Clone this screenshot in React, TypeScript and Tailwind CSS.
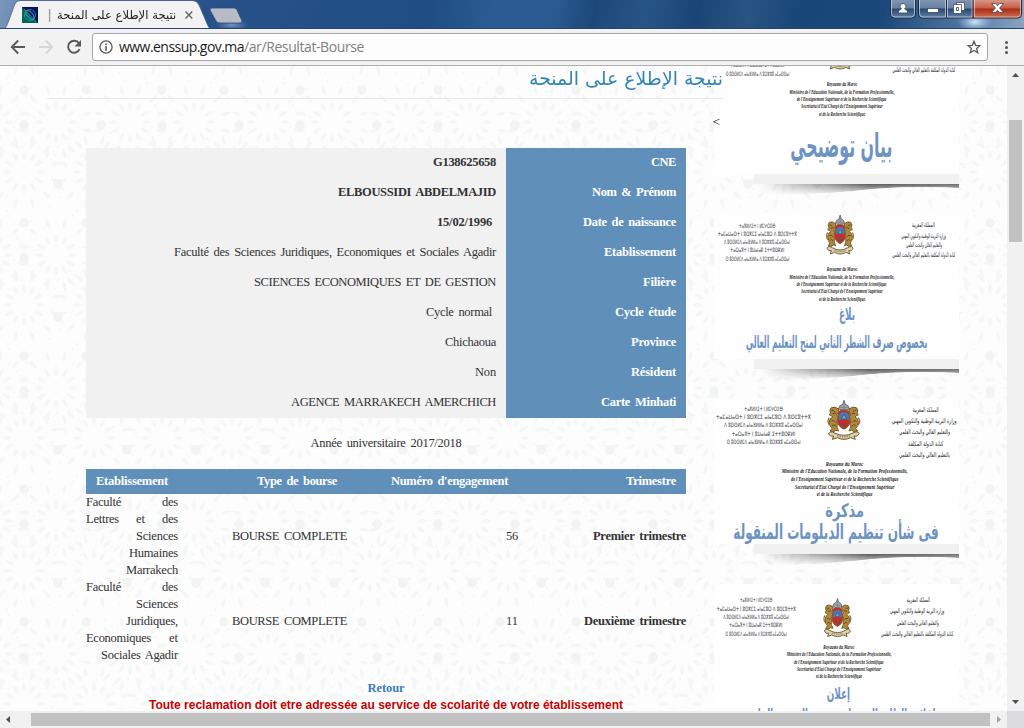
import React, { useLayoutEffect, useRef, useState } from "react";

/* Latin text spread to a given width through letter spacing. */
function Fit({ w, children, className = "" }: { w: number; children: string; className?: string }) {
  const ref = useRef<HTMLSpanElement>(null);
  const [gap, setGap] = useState(0);
  useLayoutEffect(() => {
    const el = ref.current;
    if (el) setGap((w - el.getBoundingClientRect().width) / children.length);
  }, []);
  return (
    <span ref={ref} style={{ letterSpacing: gap }} className={`inline-block whitespace-pre ${className}`}>
      {children}
    </span>
  );
}

/* Arabic text keeps its joins, so it is stretched as a whole. */
function Arabic({ w, children, className = "" }: { w: number; children: string; className?: string }) {
  const ref = useRef<HTMLSpanElement>(null);
  const [scale, setScale] = useState(1);
  useLayoutEffect(() => {
    const el = ref.current;
    if (el) setScale(w / el.offsetWidth);
  }, []);
  return (
    <span
      ref={ref}
      dir="rtl"
      style={{ transform: `scaleX(${scale})` }}
      className={`inline-block origin-right whitespace-nowrap font-['DejaVu_Sans',sans-serif] ${className}`}
    >
      {children}
    </span>
  );
}

function Backdrop() {
  const petals = [0, 30, 60, 90, 120, 150, 180, 210, 240, 270, 300, 330];
  return (
    <svg className="absolute inset-0 h-full w-full" aria-hidden="true">
      <defs>
        <g id="rose">
          {petals.map((a) => (
            <g key={a} transform={`rotate(${a})`}>
              <path d="M0-12Q4-16 0-22Q-4-16 0-12Z" />
              <path d="M7-26Q12-30 10-37Q5-33 7-26Z" />
              <circle cx="3" cy="-30" r=".8" />
              <circle cx="-5" cy="-42" r="1.2" />
            </g>
          ))}
        </g>
        <g id="star">
          {petals.map((a) => (
            <ellipse key={a} cx="0" cy="-2.6" rx="1.3" ry="2.6" transform={`rotate(${a})`} />
          ))}
        </g>
        <pattern id="zellige" width="138" height="133" patternUnits="userSpaceOnUse" x="94" y="14">
          <g fill="#f5f7f7">
            <use href="#rose" x="36" y="42" />
            <use href="#rose" x="100" y="42" />
            <use href="#rose" x="68" y="92" />
            <use href="#rose" x="0" y="92" />
            <use href="#rose" x="138" y="92" />
          </g>
          <g fill="#f2f4f4">
            <use href="#star" x="33" y="104" />
            <use href="#star" x="7" y="45" />
            <use href="#star" x="68" y="45" />
            <use href="#star" x="102" y="104" />
            <use href="#star" x="68" y="10" />
            <use href="#star" x="130" y="10" />
          </g>
        </pattern>
      </defs>
      <rect width="100%" height="100%" fill="url(#zellige)" />
    </svg>
  );
}

function WindowTop() {
  return (
    <div className="relative h-[29px] shrink-0 overflow-hidden border-b border-[#28466f] bg-[linear-gradient(102deg,#7c96bb_0%,#6483af_3%,#28528a_20%,#1f4d84_42%,#2b5b92_48%,#2b5a92_54%,#1c4879_58%,#285587_63%,#194475_68%,#295484_73%,#184678_78%,#1b487a_86%,#4e75a0_94%,#8ba5c0_100%)]">
      <svg className="absolute inset-0" width="1024" height="29">
        <defs>
          <linearGradient id="btn" x1="0" y1="0" x2="0" y2="1">
            <stop offset="0" stopColor="#8398b4" />
            <stop offset=".48" stopColor="#6580a3" />
            <stop offset=".52" stopColor="#29476f" />
            <stop offset="1" stopColor="#6583a8" />
          </linearGradient>
          <linearGradient id="close" x1="0" y1="0" x2="0" y2="1">
            <stop offset="0" stopColor="#dc9c8e" />
            <stop offset=".48" stopColor="#c75b46" />
            <stop offset=".52" stopColor="#ac2b16" />
            <stop offset="1" stopColor="#d07350" />
          </linearGradient>
          <radialGradient id="glow">
            <stop offset="0" stopColor="#d9edff" stopOpacity=".95" />
            <stop offset="1" stopColor="#9fc0e4" stopOpacity="0" />
          </radialGradient>
        </defs>
        <path d="M0 29L5 29C8 25 13 8 15 4Q16 1 20 1H193Q197 1 199 5L208 26Q209 29 212 29Z" fill="#f2f2f2" />
        <path d="M0 28.5H5C8 25 13 8 15 4Q16 .5 20 .5H193Q197 .5 199 5L208 26Q209 28.5 212 28.5" fill="none" stroke="#4b6790" strokeWidth=".8" />
        <ellipse cx="232" cy="25" rx="17" ry="6" fill="url(#glow)" opacity=".45" />
        <path d="M212 8H234Q236 8 237 10L242 21Q242 23 240 23H220Q217 23 216 21L210 10Q210 8 212 8Z" fill="#b6bbc6" stroke="#2c4d7b" strokeWidth=".8" />
        <rect x="22" y="7" width="16" height="16" fill="#07105f" />
        <path d="M22 7L38 23H22Z" fill="#00665c" />
        <g fill="none" stroke="#3a93a5" strokeWidth=".8">
          <circle cx="30" cy="15" r="5.5" />
          <ellipse cx="30" cy="15" rx="5.5" ry="2.5" transform="rotate(45 30 15)" />
          <ellipse cx="30" cy="15" rx="3" ry="5.5" transform="rotate(-35 30 15)" />
          <path d="M24 9L36 22" />
        </g>
        <path d="M185.500 11.500L192.300 18.500M192.300 11.500L185.500 18.500" stroke="#6a6a6a" strokeWidth="1.500" />
        <ellipse cx="975" cy="22" rx="18" ry="9" fill="url(#glow)" />
        <path d="M890.5 -1V14Q890.5 18 894.5 18H911.5Q915.5 18 915.5 14V-1Z" fill="url(#btn)" stroke="#1c2f4c" />
        <path d="M891.5 0V13.500Q891.500 17 895 17H911Q914.500 17 914.500 13.500V0" fill="none" stroke="#c2d0e1" strokeOpacity=".8" />
        <path d="M918.5 -1V14Q918.5 18 922.5 18H973V-1Z" fill="url(#btn)" stroke="#1c2f4c" />
        <path d="M973 -1V18H1018Q1021.500 18 1021.500 14V-1Z" fill="url(#close)" stroke="#3f1d20" />
        <path d="M919.5 0V13.500Q919.500 17 923 17H945.500V0M947.500 0V17H972V0M974.500 0V17H1017Q1020.500 17 1020.500 13.500V0" fill="none" stroke="#d8dfe9" strokeOpacity=".65" />
        <path d="M946.500 0V17" stroke="#1c2f4c" />
        <g fill="#fff" stroke="#39475c" strokeWidth=".8">
          <path d="M898.500 13V11.500Q899 9.500 901.500 9Q900 8 900 6.300Q900.200 3.500 903 3.500Q905.800 3.500 906 6.300Q906 8 904.500 9Q907 9.500 907.500 11.500V13Z" />
          <rect x="927.5" y="8.5" width="11" height="4" />
          <path d="M956.500 2.500H964.500V10.500H956.500Z" />
          <path fillRule="evenodd" d="M953.500 4.500H961.500V13.500H953.500ZM956.500 7.500V10.500H958.500V7.500Z" />
          <path d="M991.5 3.5H995.5L997.5 5.800L999.500 3.500H1003.500L999.600 8L1003.500 12.500H999.500L997.500 10.200L995.500 12.500H991.500L995.400 8Z" />
        </g>
      </svg>
      <div className="relative flex h-full w-[176px] items-center justify-end pt-[1px]">
        <span className="mr-auto pl-[50px] text-[12px] leading-none text-[#777]">|</span>
        <Arabic w={119} className="text-[12px] leading-[20px] text-[#222]">
          نتيجة الإطلاع على المنحة
        </Arabic>
      </div>
    </div>
  );
}

function Toolbar() {
  return (
    <div className="flex h-[37px] shrink-0 items-center border-b border-[#adadad] bg-[#f2f2f2]">
      <svg width="92" height="36" fill="none" strokeWidth="1.900">
        <path d="M25 18H12M18.200 11.500L11.800 18L18.200 24.500" stroke="#5a5a5a" />
        <path d="M39 18H52M45.800 11.500L52.200 18L45.800 24.500" stroke="#d6d6d6" />
        <path d="M79 14.200A6 6 0 1 0 79.600 20.200" stroke="#5a5a5a" />
        <path d="M81 11V17.500H74.500Z" fill="#5a5a5a" />
      </svg>
      <div className="flex h-[28px] w-[896px] items-center rounded-[3px] border border-[#a6a6a6] bg-[#fdfdfd]">
        <svg className="ml-[6px] shrink-0" width="14" height="14" fill="none" stroke="#5a5a5a">
          <circle cx="7" cy="7" r="6.1" strokeWidth="1.3" />
          <path d="M7 6V10.700M7 3.400V5" strokeWidth="1.6" />
        </svg>
        <div className="ml-[6px] flex font-['Open_Sans','Noto_Sans',sans-serif] text-[14px] leading-[26px]">
          <Fit w={125} className="text-[#1c1c1c]">www.enssup.gov.ma</Fit>
          <Fit w={120} className="text-[#808080]">/ar/Resultat-Bourse</Fit>
        </div>
        <svg className="mr-[6px] ml-auto" width="14" height="14" fill="none" stroke="#5a5a5a" strokeWidth="1.3">
          <path d="M7 1.300L8.600 5.300L13 5.600L9.600 8.400L10.700 12.700L7 10.400L3.300 12.700L4.400 8.400L1 5.600L5.400 5.300Z" />
        </svg>
      </div>
      <div className="ml-[17px] flex flex-col gap-[2px]">
        <i className="h-[3px] w-[3px] rounded-full bg-[#555]" />
        <i className="h-[3px] w-[3px] rounded-full bg-[#555]" />
        <i className="h-[3px] w-[3px] rounded-full bg-[#555]" />
      </div>
    </div>
  );
}

const student: [string, number, string, number, boolean, boolean][] = [
  ["CNE", 25, "G138625658", 63, true, false],
  ["Nom & Prénom", 84, "ELBOUSSIDI ABDELMAJID", 158, true, false],
  ["Date de naissance", 93, "15/02/1996", 55, true, true],
  ["Etablissement", 72, "Faculté des Sciences Juridiques, Economiques et Sociales Agadir", 322, false, false],
  ["Filière", 33, "SCIENCES ECONOMIQUES ET DE GESTION", 242, false, false],
  ["Cycle étude", 61, "Cycle normal", 66, false, true],
  ["Province", 45, "Chichaoua", 51, false, false],
  ["Résident", 45, "Non", 21, false, false],
  ["Carte Minhati", 75, "AGENCE MARRAKECH AMERCHICH", 205, false, false],
];

type Word = [string, number];
const grants: { lines: Word[][]; no: string; term: string; termW: number }[] = [
  {
    lines: [
      [["Faculté", 35], ["des", 16]],
      [["Lettres", 33], ["et", 9], ["des", 16]],
      [["Sciences", 42]],
      [["Humaines", 49]],
      [["Marrakech", 52]],
    ],
    no: "56",
    term: "Premier trimestre",
    termW: 93,
  },
  {
    lines: [
      [["Faculté", 35], ["des", 16]],
      [["Sciences", 42]],
      [["Juridiques,", 52]],
      [["Economiques", 65], ["et", 9]],
      [["Sociales Agadir", 77]],
    ],
    no: "11",
    term: "Deuxième trimestre",
    termW: 102,
  },
];

function Main() {
  return (
    <div className="relative z-10 flex w-[723px] shrink-0 flex-col">
      <div className="ml-[47px] flex h-[33px] shrink-0 justify-end border-b border-[#e9e9e9]">
        <Arabic w={194} className="h-[26px] text-[19px] leading-[25px] text-[#2f86b5]">
          نتيجة الإطلاع على المنحة
        </Arabic>
      </div>
      <div className="flex h-[49px] shrink-0 justify-end pt-[14px] pr-[3px] font-['Liberation_Serif',serif] text-[13px] leading-[17px] text-black">&lt;</div>
      <div className="ml-[86px] flex w-[600px] shrink-0 flex-col font-['Liberation_Serif',serif] text-[12.5px] text-[#333] [word-spacing:2px]">
        <div className="flex flex-col">
          {student.map(([label, lw, value, vw, bold, space]) => (
            <div key={label} className="flex h-[30px] leading-[28px]">
              <div className={`flex w-[420px] justify-end bg-[#f1f1f1] ${space ? "pr-[14px]" : "pr-[10px]"} ${bold ? "font-bold" : ""}`}>
                <Fit w={vw}>{value}</Fit>
              </div>
              <div className="flex w-[180px] justify-end bg-[#6090ba] pr-[10px] font-bold text-white">
                <Fit w={lw}>{label}</Fit>
              </div>
            </div>
          ))}
        </div>
        <div className="flex h-[51px] justify-center leading-[50px]">
          <Fit w={151}>Année universitaire 2017/2018</Fit>
        </div>
        <div className="grid h-[25px] grid-cols-[92px_169px_171px_168px] bg-[#6090ba] text-right leading-[24px] font-bold text-white">
          <div className="pr-[10px]"><Fit w={72}>Etablissement</Fit></div>
          <div className="pr-[10px]"><Fit w={80}>Type de bourse</Fit></div>
          <div className="pr-[10px]"><Fit w={117}>Numéro d'engagement</Fit></div>
          <div className="pr-[10px]"><Fit w={50}>Trimestre</Fit></div>
        </div>
        {grants.map((g) => (
          <div key={g.no} className="grid h-[85px] grid-cols-[92px_169px_171px_168px] items-center text-right leading-[17px]">
            <div className="flex flex-col">
              {g.lines.map((words, i) => (
                <div key={i} className={`flex h-[17px] ${words.length > 1 ? "justify-between" : "justify-end"}`}>
                  {words.map(([t, w]) => (
                    <Fit key={t} w={w}>{t}</Fit>
                  ))}
                </div>
              ))}
            </div>
            <div><Fit w={115}>BOURSE COMPLETE</Fit></div>
            <div><Fit w={12}>{g.no}</Fit></div>
            <div className="font-bold"><Fit w={g.termW}>{g.term}</Fit></div>
          </div>
        ))}
        <div className="flex h-[33px] shrink-0 justify-center pt-[16px] leading-[17px] font-bold text-[#3a7cba]">
          <Fit w={37}>Retour</Fit>
        </div>
        <div className="flex shrink-0 justify-center font-['Liberation_Sans',Arial,sans-serif] text-[12px] leading-[17px] font-bold text-[#c80000] [word-spacing:0]">
          <Fit w={474}>Toute reclamation doit etre adressée au service de scolarité de votre établissement</Fit>
        </div>
      </div>
    </div>
  );
}

type Row = [text: string, x1: number, x2: number, y: number];

const tifinagh = [
  "ⵜⴰⴳⵍⴷⵉⵜ ⵏ ⵍⵎⵖⵔⵉⴱ",
  "ⵜⴰⵎⴰⵡⴰⵙⵜ ⵏ ⵓⵙⴳⵎⵉ ⴰⵏⴰⵎⵓⵔ ⴷ ⵓⵙⵎⵓⵜⵜⴳ",
  "ⴷ ⵓⵙⵙⵍⵎⴷ ⴰⵏⴰⴼⵍⵍⴰ ⴷ ⵓⵔⵣⵣⵓ ⴰⵎⴰⵙⵙⴰⵏ",
  "ⵜⴰⵔⴰⴳⵜ ⵏ ⵓⵡⴰⵏⴰⴽ ⵉⵜⵜⵓⵙⴽⵍⵏ",
  "ⵙ ⵓⵙⵙⵍⵎⴷ ⴰⵏⴰⴼⵍⵍⴰ ⴷ ⵓⵔⵣⵣⵓ ⴰⵎⴰⵙⵙⴰⵏ",
];
const french = [
  "Royaume du Maroc",
  "Ministère de l'Education Nationale, de la Formation Professionnelle,",
  "de l'Enseignement Supérieur et de la Recherche Scientifique",
  "Secrétariat d'Etat Chargé de l'Enseignement Supérieur",
  "et de la Recherche Scientifique",
];
const arabicLong = ["المملكة المغربية", "وزارة التربية الوطنية والتكوين المهني", "والتعليم العالي والبحث العلمي", "كتابة الدولة المكلفة بالتعليم العالي والبحث العلمي"];
const arabicSplit = ["المملكة المغربية", "وزارة التربية الوطنية والتكوين المهني", "والتعليم العالي والبحث العلمي", "كتابة الدولة المكلفة", "بالتعليم العالي والبحث العلمي"];

const place = (texts: string[], at: [number, number, number][]): Row[] => texts.map((t, i) => [t, ...at[i]]);

interface Letter {
  dy: number;
  emblem: string;
  tif: Row[];
  ar: Row[];
  fr: Row[];
  title: [string, number, number, number, number][];
}

const base = {
  dy: -27,
  emblem: "translate(378 30) scale(.85 1)",
  tif: place(tifinagh, [[117, 226, 62], [53, 291, 87], [72, 270, 112], [91, 253, 136], [77, 268, 161]]),
  ar: place(arabicLong, [[636, 704, 62], [604, 738, 93], [618, 726, 122], [577, 766, 150]]),
  fr: place(french, [[380, 472, 191], [268, 583, 214], [290, 559, 236], [304, 548, 258], [357, 495, 280]]),
};

const letters: Letter[] = [
  { ...base, tif: base.tif.slice(3), ar: base.ar.slice(3), title: [["بيان توضيحي", 271, 577, 410, 98]] },
  { ...base, title: [["بلاغ", 417, 465, 345, 52], ["بخصوص صرف الشطر الثاني لمنح التعليم العالي", 138, 682, 428, 52]] },
  {
    dy: -42,
    emblem: "translate(382 46)",
    tif: place(tifinagh, [[133, 248, 71], [48, 333, 95], [73, 308, 121], [95, 286, 146], [80, 302, 171]]),
    ar: place(arabicSplit, [[638, 716, 76], [575, 770, 110], [597, 750, 143], [625, 730, 177], [597, 750, 212]]),
    fr: place(french, [[377, 490, 237], [245, 623, 258], [273, 595, 282], [285, 583, 304], [350, 517, 326]]),
    title: [["مذكرة", 376, 492, 395, 56], ["فى شأن تنظيم الدبلومات المنقولة", 100, 716, 461, 62]],
  },
  {
    dy: -57,
    emblem: "translate(370 100) scale(.85 .98)",
    tif: place(tifinagh, [[120, 217, 105], [50, 288, 131], [70, 267, 156], [88, 247, 181], [76, 260, 206]]),
    ar: place(arabicLong, [[620, 690, 105], [570, 733, 140], [590, 717, 175], [543, 760, 208]]),
    fr: place(french, [[370, 463, 245], [260, 575, 267], [282, 551, 289], [291, 543, 311], [348, 486, 333]]),
    title: [["إعلان", 380, 450, 402, 48], ["لفائدة الطلبة المسجلين برسم الموسم الجامعي", 118, 706, 464, 48]],
  },
];

function Emblem({ transform }: { transform: string }) {
  const lion = (
    <g>
      <path d="M34 26Q22 17 12 22Q4 28 10 38L6 44Q14 46 16 50Q6 54 6 66Q6 78 14 84L8 92Q18 98 26 90L34 92Q26 80 30 70Q26 60 32 54Q36 48 28 44Q36 38 34 26Z" fill="#b0883a" stroke="#5d4a28" strokeWidth="2.500" />
      <path d="M12 30Q18 28 22 34M16 40L26 38M12 62Q20 58 24 66M14 76Q20 70 26 78" fill="none" stroke="#60481e" strokeWidth="3" />
      <path d="M6 74Q-2 62 6 52" fill="none" stroke="#8e6d2f" strokeWidth="4" />
    </g>
  );
  return (
    <g transform={transform}>
      {lion}
      <g transform="translate(99 0) scale(-1 1)">{lion}</g>
      <path d="M34 34Q50 22 65 34L68 64Q66 80 50 86Q33 80 31 64Z" fill="#d3262c" stroke="#7d5427" strokeWidth="3" />
      <path d="M35 58V48Q36 36 50 36Q63 36 65 48V58Z" fill="#3e7fb8" />
      <path d="M42 56L46 48L50 43L54 48L58 56Z" fill="#8d9aa3" stroke="#2f4964" strokeWidth="2" />
      <path d="M43 72H57L46 80L50 66L54 80Z" fill="none" stroke="#3c6e37" strokeWidth="2" />
      <path d="M33 26Q35 14 46 12L50 0L54 12Q65 14 66 26Q50 32 33 26Z" fill="#a7a5a8" stroke="#5d6168" strokeWidth="2.500" />
      <path d="M50 1V26M38 20Q50 25 62 20" fill="none" stroke="#71757c" strokeWidth="2" />
      <path d="M4 100Q8 90 22 98Q50 112 77 98Q92 90 95 100Q92 110 80 107L84 117L70 112Q50 122 30 112L15 117L19 107Q8 110 4 100Z" fill="#e2d2a6" stroke="#655737" strokeWidth="3" />
      <path d="M30 106Q50 114 70 106" fill="none" stroke="#6b5b3a" strokeWidth="3" strokeDasharray="4 3" />
    </g>
  );
}

function Line({ row, size, className, lift }: { row: Row; size: number; className: string; lift: number }) {
  const [t, a, b, y] = row;
  return (
    <text x={(a + b) / 2} y={y + lift} textAnchor="middle" fontSize={size} textLength={b - a} lengthAdjust="spacingAndGlyphs" className={className}>
      {t}
    </text>
  );
}

function Card({ letter, n }: { letter: Letter; n: number }) {
  return (
    <div className="flex h-[185px] w-[245px] shrink-0 flex-col">
      <svg className="h-[145px] w-[245px] shrink-0 bg-[#fefefe]" viewBox="0 0 735 435">
        <g transform={`translate(-42 ${letter.dy})`}>
          <Emblem transform={letter.emblem} />
          {letter.tif.map((r) => (
            <Line key={r[0]} row={r} size={18} lift={6} className="fill-[#3c3c44] font-['DejaVu_Sans',sans-serif]" />
          ))}
          {letter.ar.map((r) => (
            <Line key={r[0]} row={r} size={20} lift={5} className="fill-[#25252b] font-['DejaVu_Sans',sans-serif]" />
          ))}
          {letter.fr.map((r) => (
            <Line key={r[0]} row={r} size={21} lift={7} className="fill-[#1c1c22] font-['Liberation_Serif',serif] font-bold italic" />
          ))}
          {letter.title.map(([t, a, b, y, size]) => (
            <Line key={t} row={[t, a, b, y]} size={size} lift={0} className="fill-[#6c93c2] font-['DejaVu_Sans',sans-serif] font-bold" />
          ))}
        </g>
      </svg>
      <div className="ml-[40px] h-[10px] w-[205px] bg-[#f1f1f1]" />
      <svg className="ml-[40px]" width="205" height="12">
        <defs>
          <linearGradient id={`sh${n}`} x1="0" x2="1" y1="0" y2="0">
            <stop offset="0" stopColor="#777" stopOpacity="0" />
            <stop offset=".2" stopColor="#666" stopOpacity=".4" />
            <stop offset=".55" stopColor="#333" stopOpacity=".8" />
            <stop offset="1" stopColor="#444" stopOpacity=".75" />
          </linearGradient>
          <linearGradient id={`wh${n}`} x1="0" x2="0" y1="0" y2="1">
            <stop offset="0" stopColor="#fff" />
            <stop offset="1" stopColor="#000" />
          </linearGradient>
          <mask id={`m${n}`}>
            <path d="M0 0H205V4Q150 1 100 7Q50 12 6 11Z" fill={`url(#wh${n})`} />
          </mask>
        </defs>
        <path d="M4 0H205V4Q150 1 100 7Q50 12 6 11Z" fill={`url(#sh${n})`} mask={`url(#m${n})`} />
      </svg>
    </div>
  );
}

export default function App() {
  return (
    <div className="flex h-[728px] w-[1024px] flex-col overflow-hidden bg-[#fdfdfd]">
      <WindowTop />
      <Toolbar />
      <div className="flex h-[645px] shrink-0">
        <div className="relative flex w-[1007px] overflow-hidden bg-[#fdfdfd]">
          <Backdrop />
          <Main />
          <div className="relative -mt-[37px] -ml-[9px] flex flex-col">
            {letters.map((l, i) => (
              <Card key={i} letter={l} n={i} />
            ))}
          </div>
        </div>
        <div className="flex w-[17px] flex-col items-center bg-[#f1f1f1]">
          <svg width="17" height="54"><path d="M5 11L8.500 7L12 11Z" fill="#505050" /></svg>
          <div className="h-[122px] w-[13px] bg-[#c1c1c1]" />
          <svg className="mt-auto" width="17" height="17"><path d="M5 6L8.500 10L12 6Z" fill="#505050" /></svg>
        </div>
      </div>
      <div className="flex h-[17px] shrink-0 items-center bg-[#f1f1f1]">
        <svg width="31" height="17"><path d="M10 5L6 8.500L10 12Z" fill="#505050" /></svg>
        <div className="h-[13px] w-[959px] bg-[#c1c1c1]" />
        <svg width="17" height="17"><path d="M7 5L11 8.500L7 12Z" fill="#a3a3a3" /></svg>
        <div className="h-[17px] w-[17px] bg-[#dcdcde]" />
      </div>
    </div>
  );
}
